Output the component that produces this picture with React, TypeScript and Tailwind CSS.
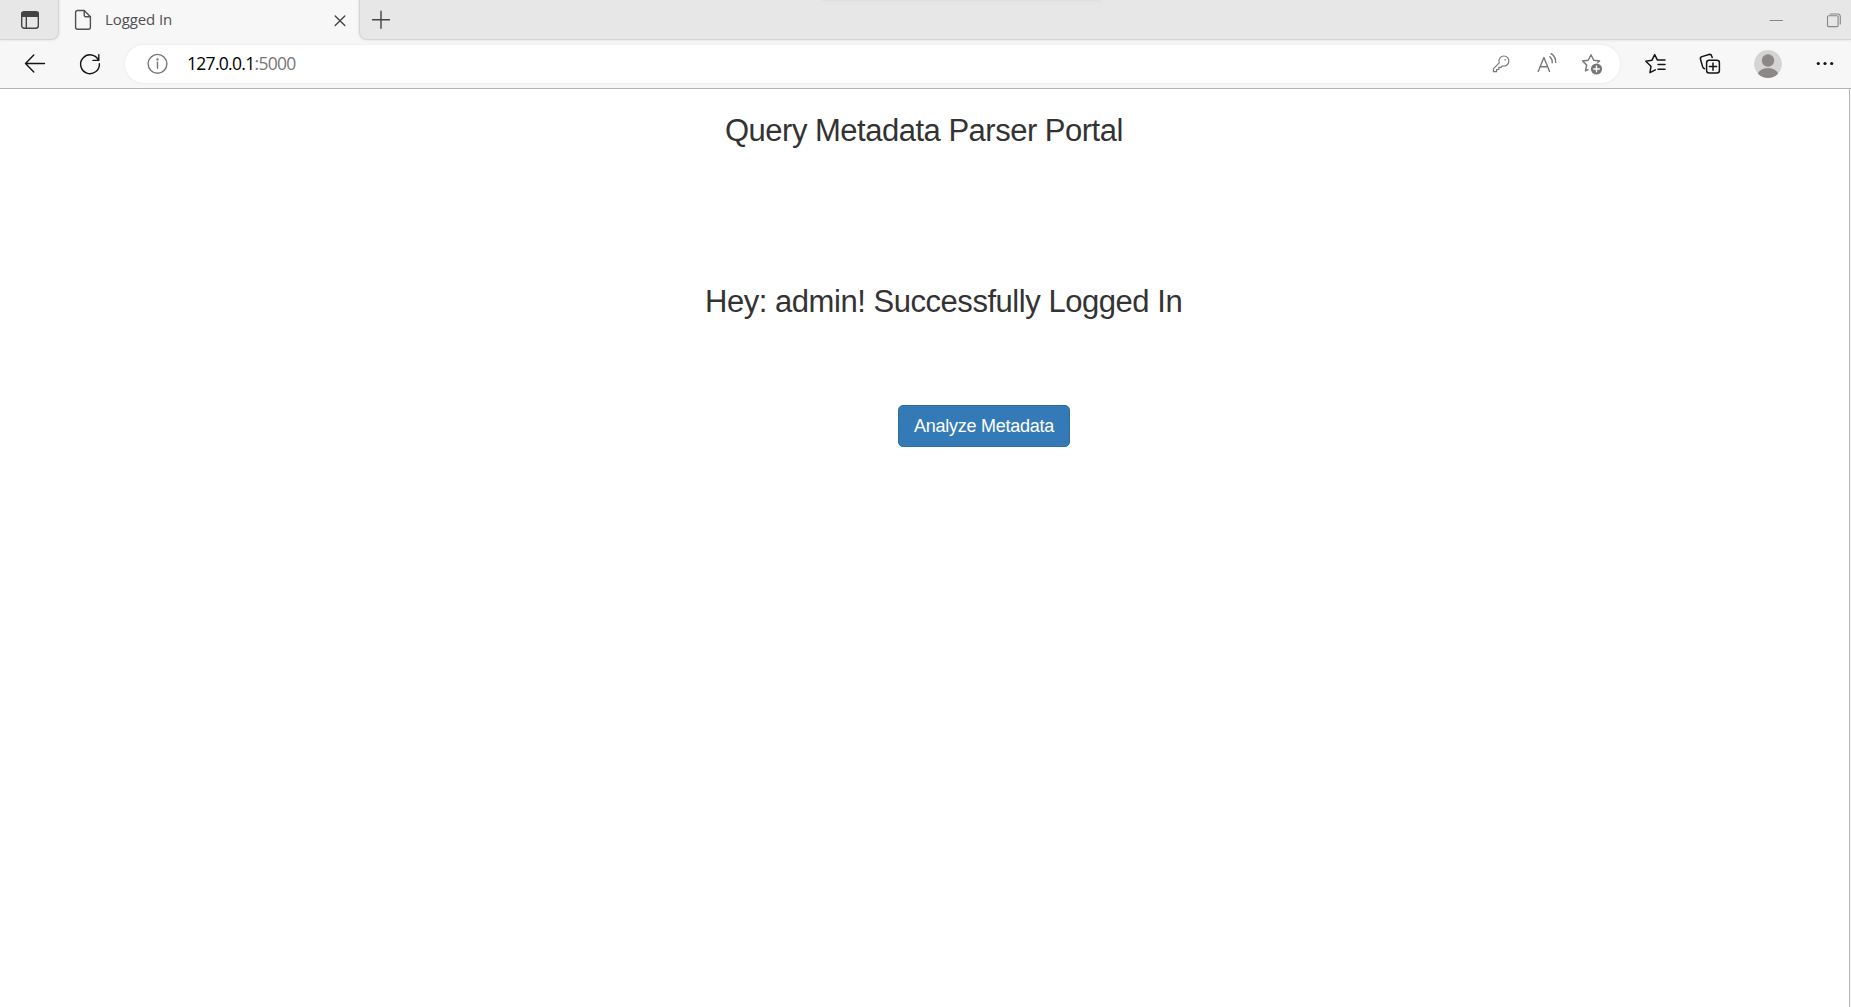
import type { ReactNode } from "react";

function Icon({ className = "", children }: { className?: string; children: ReactNode }) {
  return (
    <svg
      viewBox="0 0 24 24"
      fill="none"
      stroke="currentColor"
      strokeWidth="1.4"
      strokeLinecap="round"
      strokeLinejoin="round"
      className={`size-6 shrink-0 ${className}`}
    >
      {children}
    </svg>
  );
}

function TabStrip() {
  return (
    <div className="flex h-10 bg-[#f7f7f7] text-[#444]">
      <div className="relative z-10 flex w-[59px] items-center rounded-br-lg border-r border-b border-[#d4d4d4] bg-[#e7e7e7] pl-[18px] shadow-[0_0_3px_#d8d8d8]">
        <Icon>
          <rect x="3.7" y="3.7" width="16.6" height="16.6" rx="2.5" />
          <path d="M4 4.5h16v3.7H4z" fill="currentColor" />
          <path d="M8.3 8v12" />
        </Icon>
      </div>
      <div className="flex w-[300px] items-center rounded-t-lg pl-3">
        <Icon className="text-[#505050]">
          <path d="M6.6 2.5h6.6l6.2 6.2v10.6a2 2 0 0 1-2 2H6.6a2 2 0 0 1-2-2V4.5a2 2 0 0 1 2-2z" />
          <path d="M13.2 2.8v4.4a1.5 1.5 0 0 0 1.5 1.5h4.5" />
        </Icon>
        <span className="mb-0.5 ml-[10px] flex-1 font-['Open_Sans',sans-serif] text-[15px] leading-5 tracking-[-0.1px] whitespace-nowrap text-[#505050]">
          Logged In
        </span>
        <Icon className="mr-[7px]">
          <path d="m7.2 7.9 9.6 9.6m0-9.6-9.6 9.6" />
        </Icon>
      </div>
      <div className="relative flex flex-1 items-center rounded-bl-lg border-b border-l border-[#d4d4d4] bg-[#e7e7e7] pl-[9px] shadow-[0_0_3px_#d8d8d8]">
        <Icon>
          <path d="M12 3.3v17M3.5 11.8h17" />
        </Icon>
        <div className="ml-[428px] h-px w-[280px] self-start bg-[#e0e0e0] shadow-[0_1px_3px_#ddd]" />
        <div className="flex-1" />
        <Icon className="mr-[33px] text-[#858585]">
          <path d="M5 12.5h12.5" strokeWidth="1" />
        </Icon>
        <Icon className="mr-[5px] text-[#858585]">
          <g strokeWidth="1.1">
            <rect x="5.5" y="7.8" width="10.6" height="10.8" rx="1.2" />
            <path d="M8.2 6h7.3a2.8 2.8 0 0 1 2.8 2.8V16" />
          </g>
        </Icon>
      </div>
    </div>
  );
}

function Toolbar() {
  return (
    <div className="flex h-[49px] items-center border-b border-[#b5b5b5] bg-[#f7f7f7] text-[#151515]">
      <Icon className="ml-[23px]">
        <path d="M21.5 11.5H2.5m8.3-8.5L2.5 11.5l8.3 8.5" />
      </Icon>
      <Icon className="ml-[31px]">
        <path d="M20.5 8.2a9.4 9.4 0 1 0 .9 3.6M20.8 2.6v5.8H15" />
      </Icon>
      <div className="ml-[23px] flex h-[38px] w-[1495px] items-center rounded-full bg-white pl-5 text-[#777] shadow-[0_0_3px_#e5e5e5]">
        <Icon>
          <circle cx="12.5" cy="11.8" r="9.4" />
          <path d="M12.5 10.3v6" />
          <circle cx="12.5" cy="7.4" r=".5" fill="currentColor" />
        </Icon>
        <span className="mb-0.5 ml-[18px] flex-1 font-['Open_Sans',sans-serif] text-[17.5px] leading-6 tracking-[-0.7px] whitespace-nowrap">
          <span className="text-black">127.0.0.1</span>:5000
        </span>
        <Icon className="mr-[21px]">
          <path
            d="M13.7 4a5 5 0 1 1-1.2 9.8L11 15.3H8.8v2.2H6.6v2.2H3.5v-3.1l5.7-5.8A5 5 0 0 1 13.7 4z"
            strokeWidth="1.2"
          />
          <circle cx="15.2" cy="7.8" r=".8" fill="currentColor" stroke="none" />
        </Icon>
        <Icon className="mr-[21px]">
          <path d="M3.2 19.4 8.9 5.6l5.7 13.8M5.2 14.7h7.4" />
          <path d="M14.8 4.7a7 7 0 0 1 2.4 6M16.1 1.7a10 10 0 0 1 4.6 8.7" />
        </Icon>
        <Icon className="mr-4">
          <path d="M8 17.6 5.5 19l1.2-6L2.5 9l5.8-.8L11 2.8l2.7 5.4 5.9.8-1.8 1.6" />
          <circle cx="16.5" cy="17" r="5.6" fill="currentColor" stroke="none" />
          <path d="M16.5 14.2v5.6M13.7 17h5.6" stroke="white" />
        </Icon>
      </div>
      <Icon className="ml-[23px]">
        <path
          d="M12.3 17.8 7 20.6l1-6.4L2.8 9.3l6.1-1L11.7 2.6l2.6 5.3M15 8h7M15 12.6h7M15 17.2h7"
          strokeWidth="1.5"
        />
      </Icon>
      <Icon className="ml-[31px]">
        <path
          d="M6.5 16.8c-1-.4-1.6-1.2-1.9-2.2L2.5 7.2c-.4-1.3.2-2.2 1.4-2.6L11 2.5c1.4-.4 2.3.2 2.7 1.5l.5 1.5"
          strokeWidth="1.5"
        />
        <rect x="8.6" y="8.2" width="12.8" height="12.8" rx="2.5" strokeWidth="1.5" />
        <path d="M15 11v7.2M11.4 14.6h7.2" strokeWidth="1.5" />
      </Icon>
      <svg viewBox="0 0 28 28" className="ml-8 size-7 shrink-0 overflow-hidden rounded-full">
        <circle cx="14" cy="14" r="14" fill="#d6d4d2" />
        <circle cx="14" cy="10.5" r="6.2" fill="#8c8887" />
        <ellipse cx="14" cy="24.5" rx="10.2" ry="6.5" fill="#8c8887" />
      </svg>
      <Icon className="ml-[31px]">
        <g fill="currentColor" stroke="none">
          <circle cx="5.3" cy="11.5" r="1.6" />
          <circle cx="12" cy="11.5" r="1.6" />
          <circle cx="18.7" cy="11.5" r="1.6" />
        </g>
      </Icon>
    </div>
  );
}

export default function App() {
  return (
    <div className="flex h-screen flex-col overflow-hidden bg-[#f7f7f7] font-['Liberation_Sans',Arial,sans-serif]">
      <TabStrip />
      <Toolbar />
      <main className="mr-px flex flex-1 flex-col items-start border-r border-[#b5b5b5] bg-white text-[#333]">
        <h2 className="mt-[25px] ml-[725px] text-[31px] leading-[34px] tracking-[-0.5px] whitespace-nowrap">
          Query Metadata Parser Portal
        </h2>
        <h2 className="mt-[137px] ml-[705px] text-[31px] leading-[34px] tracking-[-0.46px] whitespace-nowrap">
          Hey: admin! Successfully Logged In
        </h2>
        <button className="mt-[86px] ml-[898px] h-[42px] w-[172px] rounded-[5px] border border-[#2e6da4] bg-[#337ab7] text-[18px] leading-6 tracking-[-0.25px] whitespace-nowrap text-white">
          Analyze Metadata
        </button>
      </main>
    </div>
  );
}
